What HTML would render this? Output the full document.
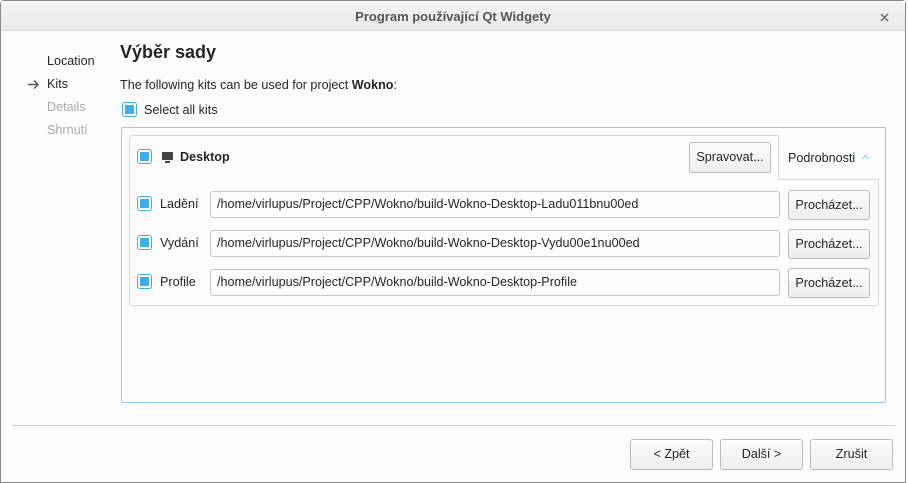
<!DOCTYPE html>
<html><head><style>
*{box-sizing:border-box;margin:0;padding:0}
body{width:908px;height:483px;background:#fff;font-family:"Liberation Sans",sans-serif;font-size:12.6px;color:#232627;position:relative;overflow:hidden}
.frame{position:absolute;left:0;top:0;width:906px;height:483px;border:1px solid #888;border-radius:4px 4px 0 0;background:#fcfcfc}
.title{position:absolute;left:1px;top:1px;width:904px;height:30px;background:linear-gradient(#f5f5f5,#e9e9e9);border-bottom:1px solid #d4d4d4;text-align:center;line-height:32px;font-weight:bold;font-size:13px;color:#555}
.a{position:absolute;white-space:nowrap}
.cb{position:absolute;width:15px;height:15px;border:1px solid #3daee9;border-radius:3px;background:#fff}
.cb::after{content:"";position:absolute;left:2px;top:2px;width:9px;height:9px;background:#3daee9}
.btn{position:absolute;border:1px solid #bbb;border-radius:3px;background:linear-gradient(#fcfcfc,#eee);text-align:center}
.field{position:absolute;border:1px solid #c4c4c4;border-radius:3px;background:#fcfcfc;padding-left:6px;line-height:25px}
</style></head><body>
<div class="frame"></div>
<div class="title">Program používající Qt Widgety</div>
<svg class="a" style="left:880px;top:13px" width="9" height="9"><path d="M1 1L8 8M8 1L1 8" stroke="#777" stroke-width="1.6"/></svg>
<div class="a" style="left:47px;top:54px">Location</div>
<svg class="a" style="left:27px;top:79px" width="13" height="11"><path d="M1 5.5H11M7 1.5L11 5.5L7 9.5" stroke="#555" stroke-width="1.5" fill="none"/></svg>
<div class="a" style="left:47px;top:77px">Kits</div>
<div class="a" style="left:47px;top:100px;color:#aaa">Details</div>
<div class="a" style="left:47px;top:123px;color:#aaa">Shrnutí</div>
<div class="a" style="left:120px;top:42px;font-size:18px;font-weight:bold">Výběr sady</div>
<div class="a" style="left:120px;top:78px">The following kits can be used for project <b>Wokno</b>:</div>
<div class="cb" style="left:122px;top:102px"></div>
<div class="a" style="left:144px;top:103px">Select all kits</div>
<div style="position:absolute;left:121px;top:127px;width:765px;height:276px;border:1px solid #93cee9;border-radius:2px"></div>
<div style="position:absolute;left:129px;top:135px;width:750px;height:171px;border:1px solid #d6d6d6;border-radius:3px"></div>
<div style="position:absolute;left:778px;top:135px;width:101px;height:45px;border-left:1px solid #d6d6d6;border-bottom:1px solid #d6d6d6;background:#fcfcfc"></div>
<div class="a" style="left:788px;top:151px">Podrobnosti</div>
<svg class="a" style="left:861px;top:154px" width="9" height="6"><path d="M1 5L4.5 1.5L8 5" stroke="#93cee9" stroke-width="1.2" fill="none"/></svg>
<div class="cb" style="left:137px;top:149px"></div>
<svg class="a" style="left:161px;top:151px" width="14" height="13"><rect x="1" y="1" width="11" height="8" fill="#444"/><rect x="4" y="10" width="5" height="2" fill="#444"/></svg>
<div class="a" style="left:180px;top:150px;font-weight:bold">Desktop</div>
<div class="btn" style="left:689px;top:142px;width:82px;height:31px;line-height:29px">Spravovat...</div>
<div class="cb" style="left:137px;top:196px"></div><div class="a" style="left:160px;top:197px">Ladění</div>
<div class="field" style="left:210px;top:191px;width:570px;height:27px">/home/virlupus/Project/CPP/Wokno/build-Wokno-Desktop-Ladu011bnu00ed</div>
<div class="btn" style="left:788px;top:190px;width:82px;height:30px;line-height:28px">Procházet...</div>
<div class="cb" style="left:137px;top:235px"></div><div class="a" style="left:160px;top:236px">Vydání</div>
<div class="field" style="left:210px;top:230px;width:570px;height:27px">/home/virlupus/Project/CPP/Wokno/build-Wokno-Desktop-Vydu00e1nu00ed</div>
<div class="btn" style="left:788px;top:229px;width:82px;height:30px;line-height:28px">Procházet...</div>
<div class="cb" style="left:137px;top:274px"></div><div class="a" style="left:160px;top:275px">Profile</div>
<div class="field" style="left:210px;top:269px;width:570px;height:27px">/home/virlupus/Project/CPP/Wokno/build-Wokno-Desktop-Profile</div>
<div class="btn" style="left:788px;top:268px;width:82px;height:30px;line-height:28px">Procházet...</div>
<div style="position:absolute;left:12px;top:425px;width:883px;height:1px;background:#ccc"></div>
<div class="btn" style="left:630px;top:439px;width:83px;height:31px;line-height:29px">&lt; Zpět</div>
<div class="btn" style="left:720px;top:439px;width:83px;height:31px;line-height:29px">Další &gt;</div>
<div class="btn" style="left:810px;top:439px;width:83px;height:31px;line-height:29px">Zrušit</div>
</body></html>
